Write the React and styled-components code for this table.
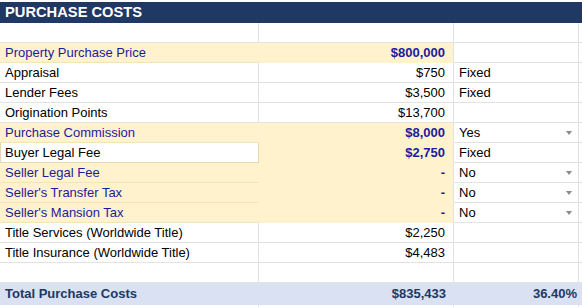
import React from "react";
import styled, { createGlobalStyle } from "styled-components";

const GlobalStyle = createGlobalStyle`
  html, body {
    margin: 0;
    padding: 0;
    background: #ffffff;
  }
  body {
    font-family: "Liberation Sans", Arial, sans-serif;
  }
`;

const CREAM = "#fff2cc";
const GRID = "#e2e2e2";
const BLUE = "#1b1ba0";
const NAVY = "#203864";

const Sheet = styled.div`
  width: 582px;
  height: 307px;
  overflow: hidden;
  padding-top: 2px;
  box-sizing: border-box;
`;

const Title = styled.div`
  height: 21px;
  background: ${NAVY};
  color: #ffffff;
  font-weight: bold;
  font-size: 14.7px;
  line-height: 21px;
  padding-left: 5px;
`;

const Row = styled.div`
  display: grid;
  grid-template-columns: 259px 195px 125px 3px;
  height: ${(p) => p.$h || 20}px;
`;

const Cell = styled.div`
  box-sizing: border-box;
  display: flex;
  align-items: center;
  justify-content: ${(p) => (p.$right ? "flex-end" : "flex-start")};
  padding: ${(p) => (p.$right ? "0 8px 0 4px" : "0 6px 0 5px")};
  background: ${(p) => p.$bg || "#ffffff"};
  border-right: 1px solid ${(p) => p.$vline || GRID};
  border-bottom: 1px solid ${(p) => p.$hline || GRID};
  color: ${(p) => p.$color || "#000000"};
  font-weight: ${(p) => (p.$bold ? "bold" : "normal")};
  font-size: 13px;
  white-space: nowrap;
`;

const Boxed = styled(Cell)`
  border: 1px solid #e3d7b1;
  border-top: none;
  padding-left: 4px;
`;

const Arrow = styled.span`
  margin-left: auto;
  width: 0;
  height: 0;
  border-left: 3.5px solid transparent;
  border-right: 3.5px solid transparent;
  border-top: 4px solid #8a8a8a;
`;

const TotalRow = styled.div`
  display: grid;
  grid-template-columns: 454px 125px 3px;
  height: 22px;
  background: #d9e1f2;
  color: ${NAVY};
  font-weight: bold;
  font-size: 13px;
  line-height: 22px;
`;

const TotalLabel = styled.div`
  display: flex;
  justify-content: space-between;
  padding: 0 8px 0 5px;
`;

const TotalPct = styled.div`
  text-align: right;
  padding-right: 2px;
`;

const rows = [
  { label: "", value: "", opt: "" },
  { label: "Property Purchase Price", value: "$800,000", cream: true, input: true },
  { label: "Appraisal", value: "$750", opt: "Fixed" },
  { label: "Lender Fees", value: "$3,500", opt: "Fixed" },
  { label: "Origination Points", value: "$13,700" },
  { label: "Purchase Commission", value: "$8,000", opt: "Yes", cream: true, input: true, drop: true },
  { label: "Buyer Legal Fee", value: "$2,750", opt: "Fixed", creamValue: true, input: true, boxed: true },
  { label: "Seller Legal Fee", value: "-", opt: "No", cream: true, input: true, drop: true },
  { label: "Seller's Transfer Tax", value: "-", opt: "No", cream: true, input: true, drop: true },
  { label: "Seller's Mansion Tax", value: "-", opt: "No", cream: true, input: true, drop: true },
  { label: "Title Services (Worldwide Title)", value: "$2,250" },
  { label: "Title Insurance (Worldwide Title)", value: "$4,483" },
  { label: "", value: "" },
];

function SheetRow({ r }) {
  const labelBg = r.cream ? CREAM : "#ffffff";
  const valueBg = r.cream || r.creamValue ? CREAM : "#ffffff";
  const LabelCell = r.boxed ? Boxed : Cell;
  return (
    <Row>
      <LabelCell
        $bg={labelBg}
        $hline={r.cream ? "#f1e4bd" : undefined}
        $vline={r.cream ? CREAM : undefined}
        $color={r.input && !r.boxed ? BLUE : "#000000"}
      >
        {r.label}
      </LabelCell>
      <Cell
        $right
        $bg={valueBg}
        $hline={r.cream || r.creamValue ? CREAM : undefined}
        $color={r.input ? BLUE : "#000000"}
        $bold={r.input}
      >
        {r.value}
      </Cell>
      <Cell>
        {r.opt}
        {r.drop && <Arrow />}
      </Cell>
      <Cell />
    </Row>
  );
}

export default function App() {
  return (
    <>
      <GlobalStyle />
      <Sheet>
        <Title>PURCHASE COSTS</Title>
        {rows.map((r, i) => (
          <SheetRow key={i} r={r} />
        ))}
        <TotalRow>
          <TotalLabel>
            <span>Total Purchase Costs</span>
            <span>$835,433</span>
          </TotalLabel>
          <TotalPct>36.40%</TotalPct>
          <div />
        </TotalRow>
        <Row>
          <Cell />
          <Cell />
          <Cell />
          <Cell />
        </Row>
      </Sheet>
    </>
  );
}
